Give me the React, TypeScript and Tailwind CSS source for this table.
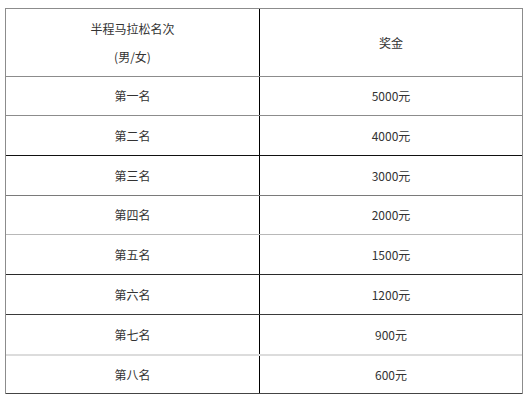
const rows: { rank: string; prize: string; h: string; line: string }[] = [
  { rank: "第一名", prize: "5000元", h: "h-[39px]", line: "border-b border-[#8c8c8c]" },
  { rank: "第二名", prize: "4000元", h: "h-[40px]", line: "border-b border-[#111]" },
  { rank: "第三名", prize: "3000元", h: "h-[40px]", line: "border-b border-[#7a7a7a]" },
  { rank: "第四名", prize: "2000元", h: "h-[39px]", line: "border-b border-[#b8b8b8]" },
  { rank: "第五名", prize: "1500元", h: "h-[40px]", line: "border-b border-[#2a2a2a]" },
  { rank: "第六名", prize: "1200元", h: "h-[40px]", line: "border-b border-[#3a3a3a]" },
  { rank: "第七名", prize: "900元", h: "h-[41px]", line: "border-b-2 border-[#dcdcdc]" },
  { rank: "第八名", prize: "600元", h: "h-[38px]", line: "border-b border-[#444]" },
];

export default function App() {
  return (
    <div
      className="h-[401px] w-[526px] bg-white pt-[8px] pl-[5px] text-[12px] text-[#333]"
      style={{ fontFamily: '"Noto Sans CJK SC", "Noto Sans", sans-serif' }}
    >
      <div className="w-[518px] border-t border-r border-l border-t-[#8c8c8c] border-r-[#8c8c8c] border-l-[#8c8c8c]">
        <div className="grid h-[68px] grid-cols-[254px_1fr] border-b border-[#8c8c8c]">
          <div className="flex flex-col items-center justify-center border-r border-black leading-[28px]">
            <span>半程马拉松名次</span>
            <span>(男/女)</span>
          </div>
          <div className="flex items-center justify-center">奖金</div>
        </div>
        {rows.map((r) => (
          <div key={r.rank} className={`grid grid-cols-[254px_1fr] ${r.h} ${r.line}`}>
            <div className="flex items-center justify-center border-r border-black">{r.rank}</div>
            <div className="flex items-center justify-center">{r.prize}</div>
          </div>
        ))}
      </div>
    </div>
  );
}
